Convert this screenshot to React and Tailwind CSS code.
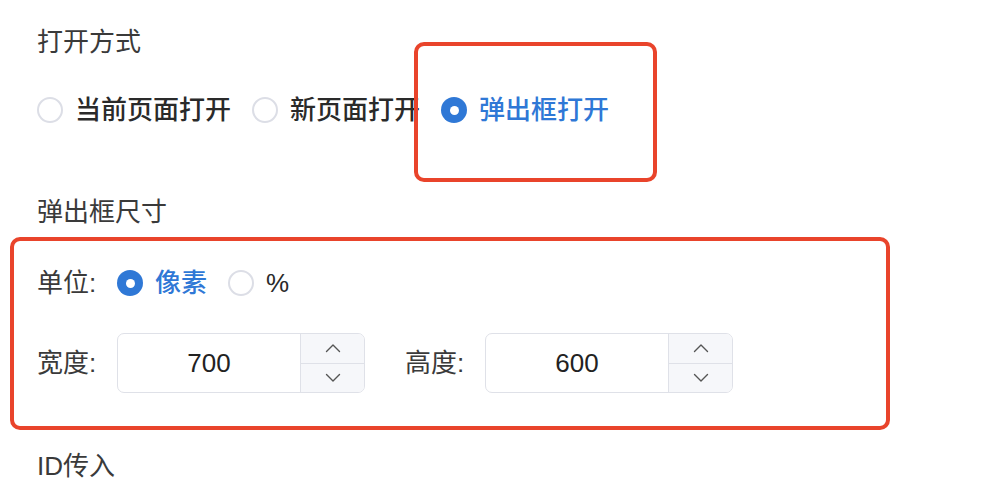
import React from 'react'

const font = { fontFamily: '"Liberation Sans", "Noto Sans CJK SC", sans-serif' }

function Radio({ checked, label, className = '' }) {
  return (
    <label className={`flex items-center gap-[12px] ${className}`}>
      {checked ? (
        <span className="w-[26px] h-[26px] rounded-full bg-[#2f78d6] flex items-center justify-center">
          <span className="w-[9px] h-[9px] rounded-full bg-white" />
        </span>
      ) : (
        <span className="w-[26px] h-[26px] rounded-full border-2 border-[#dcdee6] bg-white" />
      )}
      <span className={`text-[26px] leading-[36px] font-medium ${checked ? 'text-[#2f78d6]' : 'text-[#2a2a2a]'}`}>
        {label}
      </span>
    </label>
  )
}

function Chevron({ up }) {
  return (
    <svg width="16" height="10" viewBox="0 0 16 10" fill="none">
      <path
        d={up ? 'M1.5 8.5 L8 2 L14.5 8.5' : 'M1.5 1.5 L8 8 L14.5 1.5'}
        stroke="#555"
        strokeWidth="1.4"
        strokeLinecap="round"
        strokeLinejoin="round"
      />
    </svg>
  )
}

function NumberInput({ value }) {
  return (
    <div className="flex w-[248px] h-[60px] rounded-[7px] border-[1.5px] border-[#dfe1e8] bg-white overflow-hidden">
      <div className="flex-1 flex items-center justify-center text-[26px] text-[#222]">{value}</div>
      <div className="w-[64px] flex flex-col border-l-[1.5px] border-[#dfe1e8] bg-[#f6f7fa]">
        <div className="flex-1 flex items-center justify-center border-b-[1.5px] border-[#dfe1e8]">
          <Chevron up />
        </div>
        <div className="flex-1 flex items-center justify-center">
          <Chevron />
        </div>
      </div>
    </div>
  )
}

export default function App() {
  return (
    <div className="relative w-[1000px] h-[494px] overflow-hidden bg-white pl-[37px] pt-[24px]" style={font}>
      <div className="text-[26px] leading-[36px] text-[#3a3a3a]">打开方式</div>

      <div className="mt-[32px] flex items-center gap-[21px]">
        <Radio label="当前页面打开" />
        <Radio label="新页面打开" />
        <Radio checked label="弹出框打开" />
      </div>

      <div className="mt-[66px] text-[26px] leading-[36px] text-[#3a3a3a]">弹出框尺寸</div>

      <div className="mt-[7px] -ml-[27px] w-[880px] h-[193px] border-[4px] border-[#e9442b] rounded-[10px] pl-[23px] pt-[24px]">
        <div className="flex items-center h-[36px]">
          <span className="text-[26px] leading-[36px] text-[#3a3a3a] w-[80px]">单位:</span>
          <Radio checked label="像素" />
          <Radio label="%" className="ml-[21px]" />
        </div>
        <div className="mt-[32px] flex items-center">
          <span className="text-[26px] leading-[36px] text-[#3a3a3a] w-[80px]">宽度:</span>
          <NumberInput value="700" />
          <span className="ml-[40px] text-[26px] leading-[36px] text-[#3a3a3a] w-[80px]">高度:</span>
          <NumberInput value="600" />
        </div>
      </div>

      <div className="mt-[18px] text-[26px] leading-[36px] text-[#3a3a3a]">ID传入</div>

      <div className="absolute left-[414px] top-[42px] w-[243px] h-[140px] border-[4px] border-[#e9442b] rounded-[10px]" />
    </div>
  )
}
